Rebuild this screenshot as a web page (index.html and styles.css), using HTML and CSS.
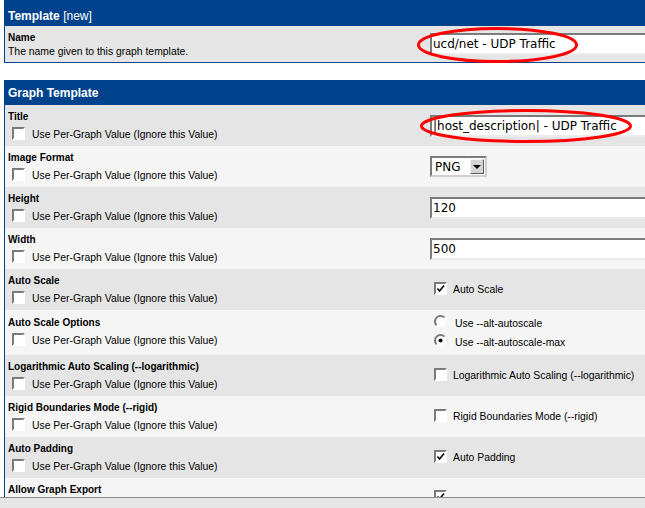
FILE: index.html
```html
<!DOCTYPE html>
<html>
<head>
<meta charset="utf-8">
<link rel="stylesheet" href="styles.css">
</head>
<body>
<div class="page">
  <section class="box first">
    <div class="hdr">Template <span class="new">[new]</span></div>
    <div class="row dark">
      <div class="lcell">
        <div class="lbl">Name</div>
        <div class="desc">The name given to this graph template.</div>
      </div>
      <div class="rcell"><div class="txt">ucd/net - UDP Traffic</div></div>
    </div>
  </section>

  <section class="box second">
    <div class="hdr">Graph Template</div>

    <div class="row dark">
      <div class="lcell"><div class="lbl">Title</div><div class="chk"><span class="cb"></span>Use Per-Graph Value (Ignore this Value)</div></div>
      <div class="rcell"><div class="txt">|host_description| - UDP Traffic</div></div>
    </div>

    <div class="row light">
      <div class="lcell"><div class="lbl">Image Format</div><div class="chk"><span class="cb"></span>Use Per-Graph Value (Ignore this Value)</div></div>
      <div class="rcell"><div class="sel"><span class="selval">PNG</span><span class="selbtn"><span class="tri"></span></span></div></div>
    </div>

    <div class="row dark">
      <div class="lcell"><div class="lbl">Height</div><div class="chk"><span class="cb"></span>Use Per-Graph Value (Ignore this Value)</div></div>
      <div class="rcell"><div class="txt">120</div></div>
    </div>

    <div class="row light">
      <div class="lcell"><div class="lbl">Width</div><div class="chk"><span class="cb"></span>Use Per-Graph Value (Ignore this Value)</div></div>
      <div class="rcell"><div class="txt">500</div></div>
    </div>

    <div class="row dark">
      <div class="lcell"><div class="lbl">Auto Scale</div><div class="chk"><span class="cb"></span>Use Per-Graph Value (Ignore this Value)</div></div>
      <div class="rcell"><div class="opt"><span class="cb on"><svg viewBox="0 0 9 9" width="9" height="9"><path d="M1.5 4.5 L3.5 7 L8 1.5" fill="none" stroke="#000" stroke-width="1.6"/></svg></span>Auto Scale</div></div>
    </div>

    <div class="row light tall">
      <div class="lcell"><div class="lbl">Auto Scale Options</div><div class="chk"><span class="cb"></span>Use Per-Graph Value (Ignore this Value)</div></div>
      <div class="rcell col">
        <div class="ropt"><svg class="rad" viewBox="0 0 13 13" width="13" height="13"><circle cx="6.5" cy="6.5" r="5.5" fill="#fff"/><path d="M2.6 10.4 A5.5 5.5 0 0 1 10.4 2.6" fill="none" stroke="#7b7b7b" stroke-width="2"/></svg>Use --alt-autoscale</div>
        <div class="ropt"><svg class="rad" viewBox="0 0 13 13" width="13" height="13"><circle cx="6.5" cy="6.5" r="5.5" fill="#fff"/><path d="M2.6 10.4 A5.5 5.5 0 0 1 10.4 2.6" fill="none" stroke="#7b7b7b" stroke-width="2"/><circle cx="6.5" cy="6.5" r="2" fill="#000"/></svg>Use --alt-autoscale-max</div>
      </div>
    </div>

    <div class="row dark">
      <div class="lcell"><div class="lbl">Logarithmic Auto Scaling (--logarithmic)</div><div class="chk"><span class="cb"></span>Use Per-Graph Value (Ignore this Value)</div></div>
      <div class="rcell"><div class="opt"><span class="cb"></span>Logarithmic Auto Scaling (--logarithmic)</div></div>
    </div>

    <div class="row light">
      <div class="lcell"><div class="lbl">Rigid Boundaries Mode (--rigid)</div><div class="chk"><span class="cb"></span>Use Per-Graph Value (Ignore this Value)</div></div>
      <div class="rcell"><div class="opt"><span class="cb"></span>Rigid Boundaries Mode (--rigid)</div></div>
    </div>

    <div class="row dark">
      <div class="lcell"><div class="lbl">Auto Padding</div><div class="chk"><span class="cb"></span>Use Per-Graph Value (Ignore this Value)</div></div>
      <div class="rcell"><div class="opt"><span class="cb on"><svg viewBox="0 0 9 9" width="9" height="9"><path d="M1.5 4.5 L3.5 7 L8 1.5" fill="none" stroke="#000" stroke-width="1.6"/></svg></span>Auto Padding</div></div>
    </div>

    <div class="row light">
      <div class="lcell"><div class="lbl">Allow Graph Export</div><div class="chk"><span class="cb"></span>Use Per-Graph Value (Ignore this Value)</div></div>
      <div class="rcell top"><div class="opt"><span class="cb on"><svg viewBox="0 0 9 9" width="9" height="9"><path d="M1.5 4.5 L3.5 7 L8 1.5" fill="none" stroke="#000" stroke-width="1.6"/></svg></span></div></div>
    </div>
  </section>
</div>

<svg class="marks" width="645" height="508" viewBox="0 0 645 508">
  <ellipse cx="497.5" cy="45" rx="79" ry="16.5" fill="none" stroke="#f00" stroke-width="3"/>
  <ellipse cx="526" cy="126" rx="104.5" ry="15.5" fill="none" stroke="#f00" stroke-width="3"/>
</svg>
<div class="hscroll"></div>
</body>
</html>
```

FILE: styles.css
```css
html, body {
  margin: 0;
  padding: 0;
  background: #fff;
  overflow: hidden;
}

body {
  font-family: "Liberation Sans", Arial, sans-serif;
  color: #000;
}

.page {
  width: 900px;
  padding-left: 4px;
}

.box {
  border: 1px solid #00438c;
  background: #fff;
}

.box.second {
  margin-top: 17px;
}

.hdr {
  background: #00438c;
  color: #fff;
  font-weight: bold;
  font-size: 12px;
  height: 24px;
  line-height: 25px;
  padding-left: 3px;
}

.first .hdr {
  height: 25px;
  line-height: 30px;
}

.hdr .new {
  font-weight: normal;
}

.row {
  display: grid;
  grid-template-columns: 425px 1fr;
}

.row.dark { background: #e5e5e5; }
.row.light { background: #f5f5f5; }

.lcell {
  padding: 5px 3px 3px 3px;
}

.tall .lcell {
  padding-top: 6px;
  padding-bottom: 6px;
}

.lbl {
  font-weight: bold;
  font-size: 10px;
  line-height: 14px;
}

.desc {
  font-size: 10.4px;
  line-height: 14px;
}

.chk {
  font-size: 10.4px;
  line-height: 16px;
  height: 16px;
  margin-top: 3px;
  white-space: nowrap;
}

.cb {
  display: inline-block;
  width: 13px;
  height: 13px;
  box-sizing: border-box;
  border: 2px solid;
  border-color: #7b7b7b #ffffff #ffffff #7b7b7b;
  background: #fff;
  vertical-align: -2px;
  margin: 0 7px 0 4px;
  position: relative;
}

.cb svg {
  position: absolute;
  left: 0;
  top: 0;
}

.rcell {
  display: flex;
  align-items: center;
}

.rcell.top {
  align-items: flex-start;
  padding-top: 12px;
}

.rcell.top .opt {
  line-height: 13px;
}

.rcell.col {
  flex-direction: column;
  align-items: flex-start;
  justify-content: center;
}

.txt {
  width: 320px;
  height: 22px;
  box-sizing: border-box;
  border: 2px solid;
  border-color: #7b7b7b #ececec #ececec #7b7b7b;
  background: #fff;
  font-family: "DejaVu Sans", sans-serif;
  font-size: 12px;
  line-height: 18px;
  padding-left: 1px;
  white-space: nowrap;
}

.sel {
  display: flex;
  align-items: center;
  width: 57px;
  height: 21px;
  box-sizing: border-box;
  border: 2px solid;
  border-color: #7b7b7b #d0d0d0 #d0d0d0 #7b7b7b;
  background: #fff;
  font-family: "DejaVu Sans", sans-serif;
  font-size: 12px;
}

.selval {
  padding-left: 3px;
}

.selbtn {
  margin-left: auto;
  margin-right: 1px;
  width: 14px;
  height: 15px;
  box-sizing: border-box;
  background: #d4d4d4;
  border: 1px solid;
  border-color: #f4f4f4 #5a5a5a #5a5a5a #f4f4f4;
  display: flex;
  align-items: center;
  justify-content: center;
}

.tri {
  width: 0;
  height: 0;
  border-left: 4px solid transparent;
  border-right: 4px solid transparent;
  border-top: 4px solid #000;
}

.opt {
  font-size: 10.4px;
  line-height: 16px;
  white-space: nowrap;
}

.opt .cb {
  margin: 0 6px 0 4px;
}

.rcell.top .opt .cb {
  vertical-align: top;
}

.ropt {
  font-size: 10.4px;
  line-height: 19px;
  white-space: nowrap;
  display: flex;
  align-items: center;
}

.rad {
  margin: -4px 8px 0 4px;
}

.marks {
  position: absolute;
  left: 0;
  top: 0;
  pointer-events: none;
}

.hscroll {
  position: fixed;
  left: 0;
  right: 0;
  bottom: 0;
  height: 10px;
  background: #e6e6e6;
  border-top: 1px solid #8c8c8c;
}
```
